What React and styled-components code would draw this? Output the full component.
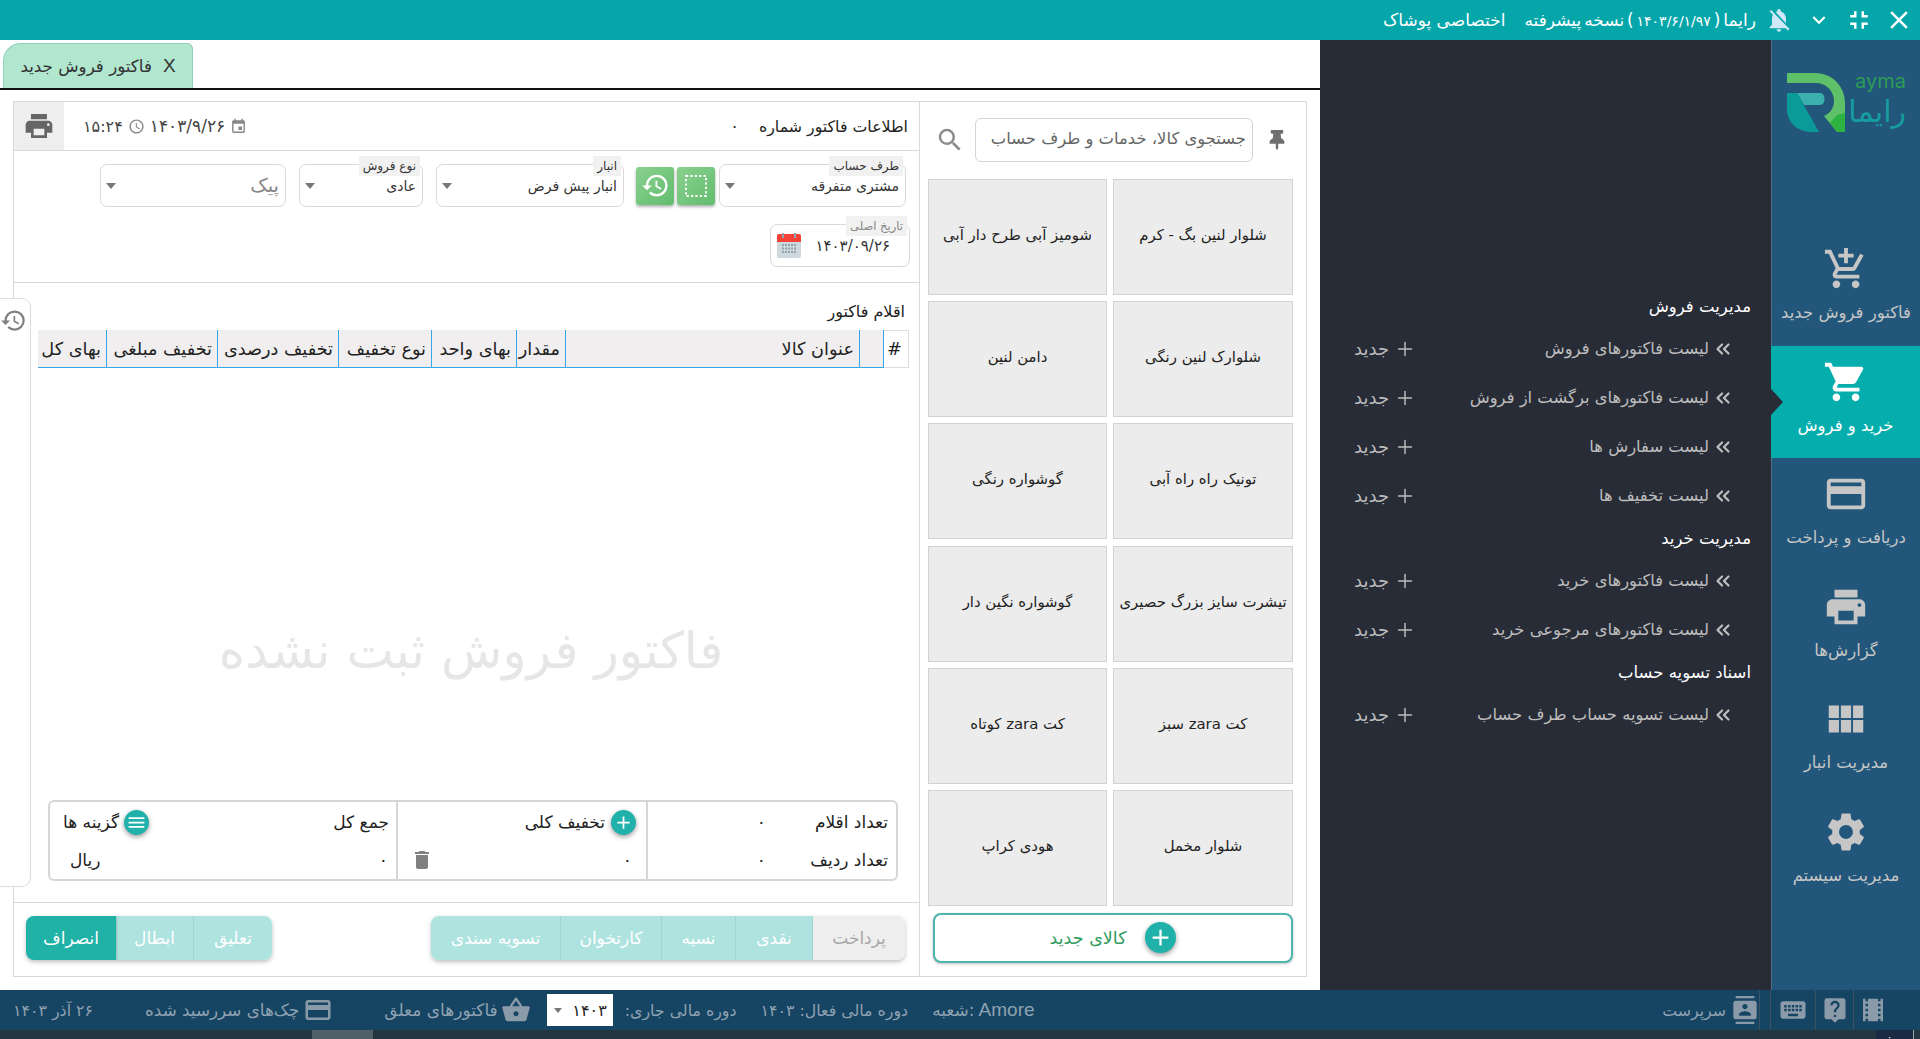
import React from "react";
import styled, { createGlobalStyle } from "styled-components";
import {
  MdAccessTime, MdAdd, MdClose, MdContacts, MdCreditCard, MdDelete, MdEvent, MdExpandMore,
  MdFullscreenExit, MdHistory, MdKeyboard, MdLiveHelp, MdLocalMovies, MdMenu,
  MdNotificationsOff, MdOutlineAddShoppingCart, MdPayment, MdPrint, MdSearch, MdSettings,
  MdShoppingBasket, MdShoppingCart, MdViewModule,
} from "react-icons/md";
import { FaThumbtack } from "react-icons/fa";
import { ChevronsLeft, Plus } from "lucide-react";

const FONT = `"DejaVu Sans", "Noto Sans", sans-serif`;

const Global = createGlobalStyle`
  html, body { margin: 0; height: 100%; overflow: hidden; background: #fff; }
  body { font-family: ${FONT}; color: #222; }
  * { box-sizing: border-box; }
`;

const Page = styled.div`
  width: 100vw; height: 100vh; display: flex; flex-direction: column; overflow: hidden;
`;
const TopBar = styled.header`
  height: 40px; flex: none; background: #05a6aa; color: #fff; display: flex; align-items: center;
  direction: rtl; padding-right: 1px; font-size: 17px;
`;
const TopIcon = styled.span`
  display: inline-flex; width: ${p => p.$w || 40}px; justify-content: center; color: ${p => p.$c || "#fff"}; font-size: ${p => p.$s || 26}px;
`;
const TopText = styled.span`
  margin-right: ${p => p.$m || 0}px; white-space: nowrap; word-spacing: ${p => p.$tight ? "-2.5px" : "normal"};
`;
const TopDigits = styled.span`
  font-size: 14px;
`;
const Main = styled.div`
  flex: none; height: 950px; display: flex;
`;
const Content = styled.main`
  width: 1320px; flex: none; background: #fff; position: relative; display: flex; flex-direction: column;
`;
const TabBar = styled.div`
  height: 50px; flex: none; padding: 3px 0 0 3px; border-bottom: 2px solid #111;
`;
const Tab = styled.div`
  width: 190px; height: 45px; background: #b1e6cf; border: 1px solid #8fd0b8; border-bottom: 0;
  border-radius: 18px 6px 0 0; display: flex; align-items: center; justify-content: center; gap: 11px;
  direction: rtl; font-size: 16.7px; color: #333;
`;
const TabX = styled.span`
  font-family: "Liberation Sans", sans-serif; font-size: 19px;
`;
const Workspace = styled.div`
  flex: 1; padding: 11px 13px 13px; display: flex; direction: rtl; min-height: 0;
`;
const ProductPanel = styled.section`
  width: 388px; flex: none; border: 1px solid #d9d9d9; display: flex; flex-direction: column; padding: 0 13px 0 13px;
`;
const SearchRow = styled.div`
  height: 77px; flex: none; display: flex; align-items: center; padding: 0 3px 2px 0;
`;
const PinIcon = styled(FaThumbtack)`
  color: #6f6f6f; font-size: 20px; flex: none; width: 20px; margin-left: 14px; margin-right: 3px;
`;
const SearchBox = styled.div`
  width: 278px; height: 44px; border: 1px solid #d5d5d5; border-radius: 6px; display: flex; align-items: center;
  padding: 0 6px 2px; font-size: 16.4px; color: #666; white-space: nowrap; overflow: hidden;
`;
const SearchGlyph = styled(MdSearch)`
  color: #8a8a8a; font-size: 30px; margin-right: 10px; flex: none;
`;
const TileGrid = styled.div`
  display: grid; grid-template-columns: 180px 179px; grid-auto-rows: 116px; gap: 6.2px 6px;
`;
const Tile = styled.button`
  background: #ececec; border: 1px solid #d2d2d2; font: inherit; font-size: 14.9px; color: #222; padding: 0 2px 4px; direction: rtl;
`;
const NewProduct = styled.button`
  height: 50px; width: 360px; margin-top: 7px; background: #fff; border: 2px solid #4db6ac; border-radius: 8px;
  box-shadow: 0 1px 3px rgba(0,0,0,.25); display: flex; align-items: center; justify-content: center; gap: 19px; font: inherit;
  font-size: 17.5px; color: #2f9b5d; direction: rtl;
`;
const Fab = styled.span`
  width: ${p => p.$d || 25}px; height: ${p => p.$d || 25}px; border-radius: 50%; background: #20b2aa; color: #fff; display: inline-flex;
  align-items: center; justify-content: center; flex: none; box-shadow: 0 2px 5px rgba(0,0,0,.4); font-size: ${p => (p.$d || 25) - 4}px;
`;
const InvoicePanel = styled.section`
  flex: 1; min-width: 0; border: 1px solid #d9d9d9; border-right: 0; display: flex; flex-direction: column;
`;
const InvoiceHead = styled.div`
  height: 49px; flex: none; border-bottom: 1px solid #d9d9d9; display: flex; align-items: center; padding-right: 11px; font-size: 15.8px;
`;
const HeadTitle = styled.span`
  white-space: nowrap;
`;
const HeadNo = styled.span`
  margin-right: 20px; font-size: 16px;
`;
const HeadMeta = styled.div`
  margin-right: auto; display: flex; align-items: center; font-size: 16px; color: #444; gap: 5px; margin-left: 19px;
`;
const HeadDate = styled.span`
  font-size: 17px;
`;
const MetaIcon = styled.span`
  display: inline-flex; font-size: 17px; color: #888;
`;
const PrintBox = styled.div`
  width: 50px; height: 48px; background: #eee; color: #666; display: flex; align-items: center; justify-content: center; font-size: 32px;
`;
const FormArea = styled.div`
  height: 132px; flex: none; border-bottom: 1px solid #d9d9d9; padding: 13px 13px 0 0;
`;
const FormRow = styled.div`
  display: flex; gap: 13px;
`;
const AccountGroup = styled.div`
  display: flex; align-items: center; gap: 3px; margin-left: -1px;
`;
const Field = styled.div`
  position: relative; width: ${p => p.$w}px; height: 43px; border: 1px solid #d9d9d9; border-radius: 7px; display: flex;
  align-items: center; justify-content: space-between; padding: 0 6px 0 5px; font-size: ${p => p.$muted ? 19.5 : 14}px; flex: none;
  color: ${p => p.$muted ? "#888" : "#333"};
`;
const FieldLabel = styled.span`
  position: absolute; top: -9px; right: 2px; padding: 1px 4px; background: #f1f1f1; font-size: ${p => p.$muted ? 11.5 : 12}px; line-height: 18px; color: ${p => p.$muted ? "#888" : "#333"}; white-space: nowrap;
`;
const Caret = styled.i`
  width: 0; height: 0; border: 5px solid transparent; border-top: 6px solid #777; border-bottom: 0; flex: none;
`;
const GreenBtn = styled.button`
  width: 38px; height: 38px; border: 0; border-radius: 3px; background: linear-gradient(135deg, #8ad08f, #62bd6e); color: #fff; padding: 0;
  display: inline-flex; align-items: center; justify-content: center; box-shadow: 0 2px 3px rgba(0,0,0,.3); font-size: 29px; margin-right: ${p => p.$mr || 0}px;
`;
const DateField = styled(Field)`
  margin-top: 17px; margin-right: -4px; justify-content: flex-start; gap: 13px; padding: 0 19px 0 7px; font-size: 15px;
  svg { flex: none; }
`;
const Items = styled.div`
  flex: 1; min-height: 0; padding: 0 10px 0 10px; position: relative; display: flex; flex-direction: column;
`;
const ItemsTitle = styled.div`
  height: 47px; flex: none; display: flex; align-items: flex-end; font-size: 16px; padding: 0 4px 9px 0;
`;
const TableHead = styled.div`
  display: flex; height: 38px; flex: none; margin-left: 14px;
`;
const Th = styled.div`
  width: ${p => p.$w}px; flex: none; background: ${p => p.$plain ? "#fff" : "#f0eeef"}; border-right: 1px solid ${p => p.$plain ? "#ddd" : "#37a6e8"};
  border-bottom: 1px solid ${p => p.$plain ? "#ddd" : "#37a6e8"}; display: flex; align-items: center; padding: 0 5px 0 2px; font-size: 17.7px; color: #222; white-space: nowrap;
  border-top: ${p => p.$plain ? "1px solid #ddd" : "0"}; justify-content: ${p => p.$c ? "center" : "flex-start"};
`;
const Watermark = styled.div`
  flex: 1; display: flex; align-items: center; justify-content: center; font-size: 50.3px; color: #e6e6e6; padding: 133px 8px 0 17px; white-space: nowrap;
`;
const Summary = styled.div`
  height: 81px; flex: none; margin: 0 11px 21px 24px; border: 2px solid #d6d6d6; border-radius: 6px; display: flex;
`;
const SumCol = styled.div`
  width: ${p => p.$w}px; flex: none; display: flex; flex-direction: column; justify-content: space-between; padding: 5px 0 4px;
  border-left: ${p => p.$last ? "0" : "2px solid #d6d6d6"}; font-size: 17px;
`;
const SumRow = styled.div`
  display: flex; align-items: center; height: 30px; justify-content: ${p => p.$between ? "space-between" : "flex-start"};
  padding: 0 ${p => p.$pr || 0}px 0 ${p => p.$pl || 0}px; white-space: nowrap; gap: ${p => p.$gap || 0}px;
`;
const SumLabel = styled.span`
  width: ${p => p.$w ? p.$w + "px" : "auto"}; flex: none;
`;
const OptGroup = styled.span`
  display: inline-flex; align-items: center; gap: 5px;
`;
const TrashIcon = styled(MdDelete)`
  color: #808080; font-size: 24px;
`;
const Footer = styled.div`
  height: 74px; flex: none; border-top: 1px solid #d9d9d9; padding: 13px 14px 0 12px; display: flex; justify-content: space-between; align-items: flex-start;
`;
const Segmented = styled.div`
  display: flex; height: 44px; border-radius: 8px; overflow: hidden; box-shadow: 0 2px 4px rgba(0,0,0,.25);
`;
const SegBtn = styled.button`
  width: ${p => p.$w}px; border: 0; font: inherit; font-size: 17px; padding: 0; color: ${p => p.$off ? "#a8a8a8" : "#fff"};
  background: ${p => p.$off ? "#eeeeee" : p.$strong ? "#20b2a6" : "#aee3df"}; border-left: ${p => p.$end ? "0" : "1px solid #9ed5d1"};
  box-shadow: ${p => p.$strong ? "0 0 3px rgba(0,0,0,.3)" : "none"}; direction: rtl; white-space: nowrap;
`;
const HistoryTab = styled.div`
  position: absolute; left: 0; top: 258px; width: 31px; height: 589px; background: #fff; border: 1px solid #dcdcdc; border-left: 0;
  border-radius: 0 9px 9px 0; color: #808080; font-size: 27px; padding-top: 8px; display: flex; justify-content: flex-start; align-items: flex-start;
`;
const Menu = styled.nav`
  width: 451px; flex: none; background: #282c37; direction: rtl; padding: 248px 20px 0 34px; position: relative;
`;
const MenuTitle = styled.div`
  height: 36px; display: flex; align-items: center; color: #fff; font-size: 16.5px;
`;
const MenuRow = styled.div`
  height: 49px; display: flex; align-items: center; justify-content: space-between; color: #bdbdbd; font-size: 16.4px; padding-right: 17px;
`;
const MenuLink = styled.span`
  display: inline-flex; align-items: center; gap: 3px; white-space: nowrap;
`;
const MenuNew = styled.span`
  display: inline-flex; align-items: center; gap: 5px; font-size: 18px;
`;
const Sidebar = styled.aside`
  flex: 1; background: #22567a; border-left: 1px solid #4d7086; position: relative; direction: rtl;
`;
const LogoWrap = styled.div`
  height: 193px; padding: 25px 0 0 15px; direction: ltr;
`;
const SideItem = styled.div`
  height: 112.6px; display: flex; flex-direction: column; align-items: center; padding-top: 11px; position: relative;
  color: ${p => p.$active ? "#fff" : "#c6c6c6"}; background: ${p => p.$active ? "#05adad" : "transparent"}; margin-left: ${p => p.$active ? "-1px" : 0};
  font-size: 16.5px; white-space: nowrap;
`;
const SideIcon = styled.span`
  height: 50px; display: flex; align-items: center; justify-content: center; font-size: ${p => p.$s || 46}px; margin-bottom: 9px;
`;
const Notch = styled.i`
  position: absolute; left: 0; top: 43px; width: 0; height: 0; border-style: solid; border-width: 13px 0 13px 12px;
  border-color: transparent transparent transparent #282c37;
`;
const StatusBar = styled.footer`
  height: 40px; flex: none; background: #164463; display: flex; justify-content: space-between; color: #8fa2b2; font-size: 15.8px; padding-left: 13px;
`;
const StatusLeft = styled.div`
  display: flex; align-items: center; white-space: nowrap;
`;
const StatusItem = styled.span`
  display: inline-flex; align-items: center; margin-left: ${p => p.$ml || 0}px; gap: ${p => p.$gap || 0}px; direction: ${p => p.$ltr ? "ltr" : "rtl"};
  font-size: ${p => p.$fs || 15.8}px;
`;
const BranchName = styled.span`
  font-family: "Liberation Sans", sans-serif; font-size: 19px; margin-left: 4px;
`;
const BranchLabel = styled.span`
  font-size: 17px;
`;
const StatusIcon = styled.span`
  display: inline-flex; font-size: ${p => p.$s || 28}px; color: #8b9aa8;
`;
const YearSelect = styled.span`
  width: 66px; height: 32px; background: #fff; color: #222; display: inline-flex; align-items: center; justify-content: space-between;
  padding: 0 6px 0 7px; direction: rtl; font-size: 16px;
`;
const SmallCaret = styled(Caret)`
  border-width: 4px; border-top: 5px solid #777; border-bottom: 0;
`;
const StatusRight = styled.div`
  display: flex; align-items: center; direction: ltr;
`;
const Cell = styled.span`
  height: 100%; width: ${p => p.$w}px; display: flex; align-items: center; justify-content: ${p => p.$start ? "flex-start" : "center"}; border-left: 1px solid #3f5263; padding-left: ${p => p.$start ? 4 : 0}px;
`;
const Strip = styled.div`
  flex: 1; min-height: 0; background: #24363f; position: relative; overflow: hidden; display: flex; justify-content: space-between;
`;
const ScrollThumb = styled.i`
  display: block; margin-left: 312px; width: 61px; background: #515f69;
`;
const ClockSliver = styled.span`
  border-right: 1px solid #9aa; margin-right: 6px; padding-right: 10px; color: #fff; font-size: 11px; line-height: 18px;
  font-family: "Liberation Sans", sans-serif; background: #1a2a42;
`;

const Logo = () => (
  <svg width="122" height="70" viewBox="0 -8 122 70">
    <path d="M0 0H28C46 0 58 14 58 30V59H50L37 43C44 40 47 34 47 28C47 18 39 10 29 10H0Z" fill="#5fc06a" />
    <path d="M43 50L50 59H58V40L50 42Z" fill="#2eb343" />
    <path d="M10 20H33C39 20 39 32 33 32H17Z" fill="#3cb0ae" />
    <path d="M0 20H10L32 59H25C10 59 0 49 0 36Z" fill="#0a9b99" />
    <text x="119" y="15" textAnchor="end" fontSize="20" fontFamily="Inter, sans-serif" fill="#2c9c57">ayma</text>
    <text x="119" y="49" textAnchor="end" fontSize="30" fontFamily={FONT} fill="#159da0">رایما</text>
  </svg>
);

const DashSquare = () => (
  <svg width="26" height="26" viewBox="0 0 26 26"><rect x="3" y="3" width="20" height="20" fill="none" stroke="#fff" strokeWidth="2" strokeDasharray="2.2 2.2" /></svg>
);

const CalendarIcon = () => (
  <svg width="26" height="26" viewBox="0 0 26 26">
    <rect x="1" y="1" width="24" height="24" rx="2" fill="#cfd8dc" />
    <path d="M1 3a2 2 0 0 1 2-2h20a2 2 0 0 1 2 2v6H1z" fill="#f44336" />
    <rect x="6" y="0" width="2" height="5" fill="#90a4ae" /><rect x="18" y="0" width="2" height="5" fill="#90a4ae" />
    <path d="M6 12h14M6 15.5h14M6 19h14" stroke="#90a4ae" strokeWidth="2" strokeDasharray="2 1" />
  </svg>
);

const Sel = ({ w, label, value, muted }) => (
  <Field $w={w} $muted={muted}>
    {label && <FieldLabel>{label}</FieldLabel>}
    <span>{value}</span>
    <Caret />
  </Field>
);

const tiles = ["شلوار لنین بگ - کرم", "شومیز آبی طرح دار آبی", "شلوارک لنین رنگی", "دامن لنین", "تونیک راه راه آبی", "گوشواره رنگی", "تیشرت سایز بزرگ حصیری", "گوشواره نگین دار", "کت zara سبز", "کت zara کوتاه", "شلوار مخمل", "هودی کراپ"];
const cols = [["#", 25, true], ["", 24], ["عنوان کالا", 294], ["مقدار", 49], ["بهای واحد", 85], ["نوع تخفیف", 93], ["تخفیف درصدی", 121], ["تخفیف مبلغی", 111], ["بهای کل", 69]];
const menu = [
  { t: "مدیریت فروش", r: ["لیست فاکتورهای فروش", "لیست فاکتورهای برگشت از فروش", "لیست سفارش ها", "لیست تخفیف ها"] },
  { t: "مدیریت خرید", r: ["لیست فاکتورهای خرید", "لیست فاکتورهای مرجوعی خرید"] },
  { t: "اسناد تسویه حساب", r: ["لیست تسویه حساب طرف حساب"] },
];
const side = [
  ["فاکتور فروش جدید", <MdOutlineAddShoppingCart />],
  ["خرید و فروش", <MdShoppingCart />, true],
  ["دریافت و پرداخت", <MdPayment />],
  ["گزارش‌ها", <MdPrint />],
  ["مدیریت انبار", <MdViewModule />],
  ["مدیریت سیستم", <MdSettings />],
];

export default function App() {
  return (
    <Page>
      <Global />
      <TopBar>
        <TopIcon $s={30}><MdClose /></TopIcon>
        <TopIcon $s={30}><MdFullscreenExit /></TopIcon>
        <TopIcon $s={26}><MdExpandMore /></TopIcon>
        <TopIcon $c="#cfe8f5" $s={28}><MdNotificationsOff /></TopIcon>
        <TopText $m={3} $tight>رایما ( <TopDigits>۱۴۰۳/۶/۱/۹۷</TopDigits> ) نسخه پیشرفته</TopText>
        <TopText $m={19}>اختصاصی پوشاک</TopText>
      </TopBar>
      <Main>
        <Content>
          <TabBar>
            <Tab><TabX>X</TabX><span>فاکتور فروش جدید</span></Tab>
          </TabBar>
          <Workspace>
            <ProductPanel>
              <SearchRow>
                <PinIcon />
                <SearchBox>جستجوی کالا، خدمات و طرف حساب</SearchBox>
                <SearchGlyph />
              </SearchRow>
              <TileGrid>{tiles.map(t => <Tile key={t}>{t}</Tile>)}</TileGrid>
              <NewProduct><Fab $d={31}><MdAdd /></Fab><span>کالای جدید</span></NewProduct>
            </ProductPanel>
            <InvoicePanel>
              <InvoiceHead>
                <HeadTitle>اطلاعات فاکتور شماره</HeadTitle>
                <HeadNo>۰</HeadNo>
                <HeadMeta>
                  <MetaIcon><MdEvent /></MetaIcon><HeadDate>۱۴۰۳/۹/۲۶</HeadDate>
                  <MetaIcon><MdAccessTime /></MetaIcon><span>۱۵:۲۴</span>
                </HeadMeta>
                <PrintBox><MdPrint /></PrintBox>
              </InvoiceHead>
              <FormArea>
                <FormRow>
                  <AccountGroup>
                    <Sel w={187} label="طرف حساب" value="مشتری متفرقه" />
                    <GreenBtn $mr={1}><DashSquare /></GreenBtn>
                    <GreenBtn><MdHistory /></GreenBtn>
                  </AccountGroup>
                  <Sel w={188} label="انبار" value="انبار پیش فرض" />
                  <Sel w={124} label="نوع فروش" value="عادی" />
                  <Sel w={186} value="پیک" muted />
                </FormRow>
                <DateField $w={140}>
                  <FieldLabel $muted>تاریخ اصلی</FieldLabel>
                  <span>۱۴۰۳/۰۹/۲۶</span>
                  <CalendarIcon />
                </DateField>
              </FormArea>
              <Items>
                <ItemsTitle>اقلام فاکتور</ItemsTitle>
                <TableHead>
                  {cols.map(([t, w, plain]) => <Th key={t + w} $w={w} $plain={plain} $c={plain}>{t}</Th>)}
                </TableHead>
                <Watermark>فاکتور فروش ثبت نشده</Watermark>
                <Summary>
                  <SumCol $w={250}>
                    <SumRow $pr={8}><SumLabel $w={122}>تعداد اقلام</SumLabel><span>۰</span></SumRow>
                    <SumRow $pr={8}><SumLabel $w={122}>تعداد ردیف</SumLabel><span>۰</span></SumRow>
                  </SumCol>
                  <SumCol $w={250}>
                    <SumRow $pr={10} $gap={6}><Fab><MdAdd /></Fab><span>تخفیف کلی</span></SumRow>
                    <SumRow $pr={14} $pl={12} $between><span>۰</span><TrashIcon /></SumRow>
                  </SumCol>
                  <SumCol $w={346} $last>
                    <SumRow $pr={7} $pl={13} $between><span>جمع کل</span><OptGroup><Fab><MdMenu /></Fab><span>گزینه ها</span></OptGroup></SumRow>
                    <SumRow $pr={8} $pl={20} $between><span>۰</span><span>ریال</span></SumRow>
                  </SumCol>
                </Summary>
              </Items>
              <Footer>
                <Segmented>
                  <SegBtn $w={93} $off>پرداخت</SegBtn>
                  <SegBtn $w={77}>نقدی</SegBtn>
                  <SegBtn $w={74}>نسیه</SegBtn>
                  <SegBtn $w={101}>کارتخوان</SegBtn>
                  <SegBtn $w={129} $end>تسویه سندی</SegBtn>
                </Segmented>
                <Segmented>
                  <SegBtn $w={79}>تعلیق</SegBtn>
                  <SegBtn $w={77} $end>ابطال</SegBtn>
                  <SegBtn $w={90} $strong $end>انصراف</SegBtn>
                </Segmented>
              </Footer>
            </InvoicePanel>
          </Workspace>
          <HistoryTab><MdHistory /></HistoryTab>
        </Content>
        <Menu>
          {menu.map(s => (
            <React.Fragment key={s.t}>
              <MenuTitle>{s.t}</MenuTitle>
              {s.r.map(r => (
                <MenuRow key={r}>
                  <MenuLink><ChevronsLeft size={22} strokeWidth={2.4} />{r}</MenuLink>
                  <MenuNew><Plus size={22} strokeWidth={1.6} />جدید</MenuNew>
                </MenuRow>
              ))}
            </React.Fragment>
          ))}
        </Menu>
        <Sidebar>
          <LogoWrap><Logo /></LogoWrap>
          {side.map(([t, icon, active]) => (
            <SideItem key={t} $active={active}>
              {active && <Notch />}
              <SideIcon>{icon}</SideIcon>
              <span>{t}</span>
            </SideItem>
          ))}
        </Sidebar>
      </Main>
      <StatusBar>
        <StatusLeft>
          <StatusItem>۲۶ آذر ۱۴۰۳</StatusItem>
          <StatusItem $ml={52} $gap={4} $fs={16.8}><StatusIcon $s={30}><MdCreditCard /></StatusIcon>چک‌های سررسید شده</StatusItem>
          <StatusItem $ml={51} $gap={3} $fs={17}><StatusIcon $s={30}><MdShoppingBasket /></StatusIcon>فاکتورهای معلق</StatusItem>
          <StatusItem $ml={16}><YearSelect><span>۱۴۰۳</span><SmallCaret /></YearSelect></StatusItem>
          <StatusItem $ml={12}>دوره مالی جاری:</StatusItem>
          <StatusItem $ml={24}>دوره مالی فعال: ۱۴۰۳</StatusItem>
          <StatusItem $ml={24} $ltr><BranchLabel>شعبه:</BranchLabel><BranchName>Amore</BranchName></StatusItem>
        </StatusLeft>
        <StatusRight>
          <StatusItem $gap={5}><StatusIcon $s={28}><MdContacts /></StatusIcon>سرپرست</StatusItem>
          <Cell $w={11} />
          <Cell $w={45}><StatusIcon $s={30}><MdKeyboard /></StatusIcon></Cell>
          <Cell $w={38}><StatusIcon $s={28}><MdLiveHelp /></StatusIcon></Cell>
          <Cell $w={67} $start><StatusIcon $s={30}><MdLocalMovies /></StatusIcon></Cell>
        </StatusRight>
      </StatusBar>
      <Strip>
        <ScrollThumb />
        <ClockSliver>۰۰:۰۰</ClockSliver>
      </Strip>
    </Page>
  );
}
